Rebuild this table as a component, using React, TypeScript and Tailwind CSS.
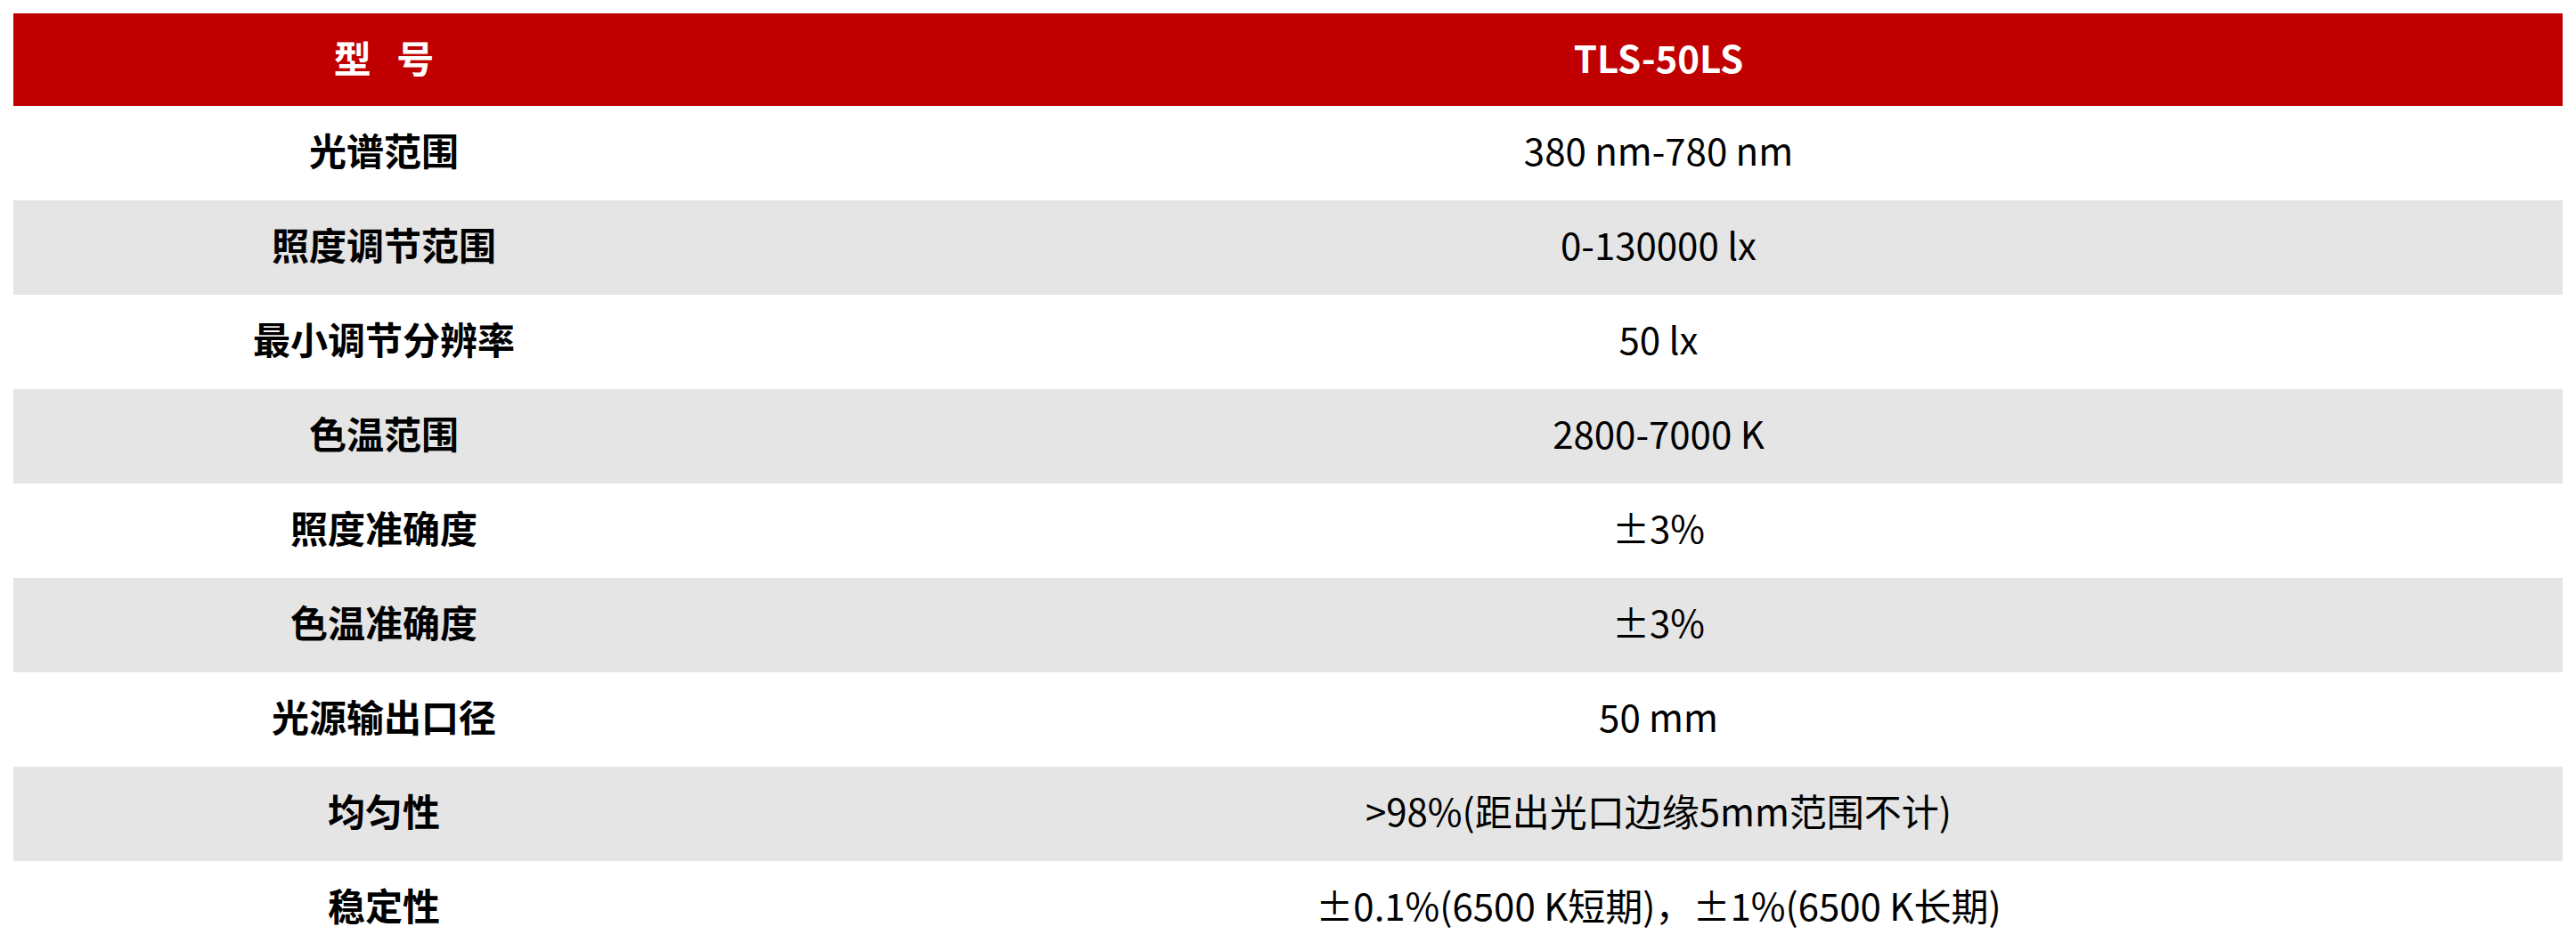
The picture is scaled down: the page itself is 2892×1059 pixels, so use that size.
import React from "react";

const rows: [string, string][] = [
  ["光谱范围", "380 nm-780 nm"],
  ["照度调节范围", "0-130000 lx"],
  ["最小调节分辨率", "50 lx"],
  ["色温范围", "2800-7000 K"],
  ["照度准确度", "±3%"],
  ["色温准确度", "±3%"],
  ["光源输出口径", "50 mm"],
  ["均匀性", ">98%(距出光口边缘5mm范围不计)"],
  ["稳定性", "±0.1%(6500 K短期)，±1%(6500 K长期)"],
];

export default function App() {
  return (
    <div className="bg-white px-[15px] pt-[15px] font-['Noto_Sans_CJK_SC','Noto_Sans',sans-serif] text-black">
      <div className="flex h-[104px] items-center bg-[#c00000] pb-[8px] text-[42px] font-bold text-white">
        <div className="flex w-[832px] justify-center">型&nbsp;&nbsp;&nbsp;号</div>
        <div className="flex flex-1 justify-center">TLS-50LS</div>
      </div>
      {rows.map(([k, v], i) => (
        <div
          key={k}
          className={
            i % 2 === 1
              ? "flex h-[106px] items-center bg-[#e5e5e5] pb-[10px] text-[42px]"
              : "flex h-[106px] items-center bg-white pb-[10px] text-[42px]"
          }
        >
          <div className="flex w-[832px] justify-center font-bold">{k}</div>
          <div className="flex flex-1 justify-center">{v}</div>
        </div>
      ))}
    </div>
  );
}
